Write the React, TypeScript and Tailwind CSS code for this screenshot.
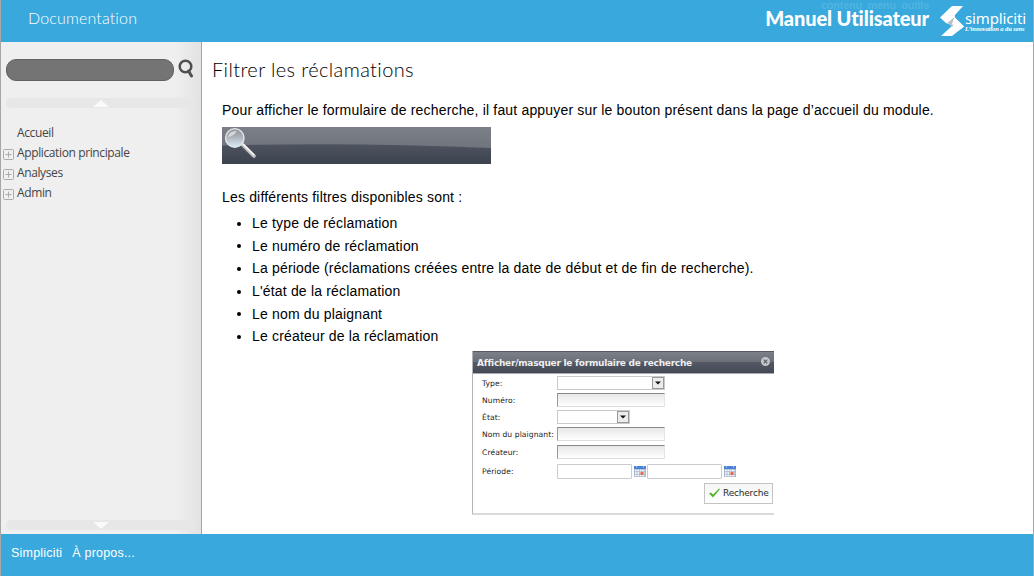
import type { ReactNode } from "react";

function SimplicitiLogo() {
  return (
    <svg className="h-[30px] w-6 shrink-0" viewBox="0 0 24 30" aria-hidden="true">
      <path d="M12 0H23L15 9L14 20L6 17L0 11.500z" fill="#fff" />
      <path d="M14 11L24 20.500L12 30H1L12 20L8 17z" fill="#fff" />
      <path d="M14.500 11L7.500 16.800L12 20.500L17 17.500z" fill="#b9bfc8" />
      <path d="M14.500 11L24 20.500L18 25L12 18z" fill="#fff" />
    </svg>
  );
}

function Header() {
  return (
    <header className="relative flex h-[42px] shrink-0 items-start bg-[#39a8dc] text-white">
      <div className="ml-[27px] mt-[6px] font-['Lato'] text-[16px] leading-6 tracking-[0.15px] font-light whitespace-nowrap">Documentation</div>
      <div className="absolute right-[104px] top-0 whitespace-nowrap font-['Liberation_Sans'] text-[11px] leading-[10px] font-bold tracking-[-0.27px] text-[#50b4e2]">contenu&nbsp; menu&nbsp; outils</div>
      <div className="relative ml-auto mt-[4px] whitespace-nowrap font-['Lato'] text-[20px] leading-7 font-black tracking-[-0.12px]">Manuel Utilisateur</div>
      <div className="ml-[11px] mt-[6px] flex w-[93px] items-start">
        <SimplicitiLogo />
        <div className="ml-px mt-[4px] whitespace-nowrap">
          <div className="font-['Noto_Sans'] text-[15px] leading-[16px] tracking-[-0.15px]">simpliciti</div>
          <div className="font-['Liberation_Serif'] text-[6.500px] leading-[6px] font-bold italic tracking-[-0.08px]">L’innovation a du sens</div>
        </div>
      </div>
    </header>
  );
}

function ScrollBar({ down = false }: { down?: boolean }) {
  return (
    <div className="flex h-[10px] w-[190px] items-center justify-center rounded-full bg-[#e7e7e7]">
      <svg className="h-[7px] w-4" viewBox="0 0 16 7">
        <path d={down ? "M0 0h16L8 7z" : "M0 7h16L8 0z"} fill="#fafafa" />
      </svg>
    </div>
  );
}

function NavItem({ label, expandable = true }: { label: string; expandable?: boolean }) {
  return (
    <li className="flex h-5 items-center">
      <span className="mt-[5px] flex w-[14px]">
        {expandable && (
          <svg className="h-[11px] w-[11px]" viewBox="0 0 11 11" fill="none" stroke="#ababab">
            <rect x=".5" y=".5" width="10" height="10" rx="1" />
            <path d="M2.500 5.500h6M5.500 2.500v6" />
          </svg>
        )}
      </span>
      <span className="mt-[2px] whitespace-nowrap font-['Open_Sans'] text-[12px] leading-5 tracking-[-0.38px] text-[#454545]">{label}</span>
    </li>
  );
}

function Sidebar() {
  return (
    <aside className="flex w-[201px] shrink-0 flex-col border-r border-[#a6a6a6] bg-[linear-gradient(to_right,#efefef_87%,#e2e2e2)] pl-[5px]">
      <div className="mt-[17px] flex">
        <div className="h-[22px] w-[168px] rounded-[10px] border border-[#626262] bg-[#747474]" />
        <svg className="ml-1 h-[21px] w-[17px]" viewBox="0 0 17 21" fill="none" stroke="#4f4f4f">
          <circle cx="7.500" cy="7.500" r="5.800" strokeWidth="2.500" />
          <path d="M10.500 12l3 5" strokeWidth="3" strokeLinecap="round" />
        </svg>
      </div>
      <div className="mt-[17px]"><ScrollBar /></div>
      <ul className="-ml-[3px] mt-[14px]">
        <NavItem label="Accueil" expandable={false} />
        <NavItem label="Application principale" />
        <NavItem label="Analyses" />
        <NavItem label="Admin" />
      </ul>
      <div className="mt-auto mb-1"><ScrollBar down /></div>
    </aside>
  );
}

function SearchBanner() {
  return (
    <svg className="block h-[37px] w-[269px]" viewBox="0 0 269 37">
      <defs>
        <linearGradient id="top" x2="0" y2="1"><stop stopColor="#7b7f88" /><stop offset="1" stopColor="#676c76" /></linearGradient>
        <linearGradient id="bottom" x2="0" y2="1"><stop stopColor="#4d535f" /><stop offset="1" stopColor="#3d434e" /></linearGradient>
        <linearGradient id="lens" x2="0" y2="1"><stop stopColor="#8b9096" /><stop offset=".5" stopColor="#b2b8bf" /><stop offset="1" stopColor="#d8ebff" /></linearGradient>
      </defs>
      <rect width="269" height="37" fill="url(#top)" />
      <path d="M0 18.500Q135 15 269 21v16H0z" fill="url(#bottom)" />
      <path d="M20 18l12 11" stroke="#51565f" strokeWidth="5" strokeLinecap="round" />
      <path d="M20 17l12 12" stroke="#c4c4c4" strokeWidth="3.500" strokeLinecap="round" />
      <path d="M21 17l11 11" stroke="#fff" strokeWidth="1.200" />
      <circle cx="12.800" cy="11" r="9.200" fill="url(#lens)" stroke="#dfe2e6" strokeWidth="1.500" />
      <path d="M6 10Q8 3 15 4Q12 9 6 10" fill="#eef2f5" opacity=".65" />
    </svg>
  );
}

function FieldRow({ label, height, children }: { label: string; height: string; children: ReactNode }) {
  return (
    <div className={`flex items-start ${height}`}>
      <span className="w-[75px] shrink-0 whitespace-nowrap pt-px font-['DejaVu_Sans'] text-[7.600px] leading-[14px] tracking-[0.08px] text-[#222]">{label}</span>
      {children}
    </div>
  );
}

function Select({ width }: { width: string }) {
  return (
    <div className={`flex h-[14px] justify-end border border-[#c8c9cc] bg-white ${width}`}>
      <div className="flex w-3 items-center justify-center border border-[#999] bg-[#ececec]">
        <svg className="h-1 w-[6px]" viewBox="0 0 6 4"><path d="M0 .5h6L3 3.500z" fill="#111" /></svg>
      </div>
    </div>
  );
}

function TextInput() {
  return <div className="h-[14px] w-[108px] border border-t-[#888] border-r-[#e5e5e5] border-b-[#ddd] border-l-[#999] bg-[linear-gradient(#e7e7e7,#fff)]" />;
}

function CalendarIcon() {
  return (
    <svg className="mt-[2px] h-[11px] w-[12px]" viewBox="0 0 12 11">
      <path d="M0 0h12v11H0z" fill="#a9b8d2" />
      <path d="M0 0h12v3H0z" fill="#4a82d8" />
      <path d="M1 4.500h10M1 7h10M1 9.500h10" stroke="#fff" strokeWidth="1.600" strokeDasharray="1.600 .8" />
      <path d="M6.500 6h3v3h-3z" fill="#e6694b" />
      <path d="M2.500 0v1.500M9.500 0v1.500" stroke="#adc7ee" />
    </svg>
  );
}

function SearchForm() {
  return (
    <section className="ml-[270px] mt-[3px] flex h-[164px] w-[302px] flex-col border-b-2 border-l border-[#d9d9d9] border-l-[#b1b4b8] bg-white">
      <div className="flex h-[23px] items-center justify-between border-t border-b border-t-[#555a63] border-b-[#a8aab0] bg-[linear-gradient(#7b7f88,#6b7079_45%,#525964_50%,#434a55)] pl-[4px] pr-[4px] text-[#f0f0f0]">
        <span className="whitespace-nowrap pt-[2px] font-['DejaVu_Sans'] text-[9px] leading-5 font-bold tracking-[-0.25px]">Afficher/masquer le formulaire de recherche</span>
        <svg className="-mt-[2px] h-[9px] w-[9px]" viewBox="0 0 9 9"><circle cx="4.500" cy="4.500" r="4.500" fill="#c5c6c8" /><path d="M2.700 2.700l3.600 3.600m0-3.600L2.700 6.300" stroke="#555b65" strokeWidth="1.200" /></svg>
      </div>
      <div className="pl-[9px] pt-[2px]">
        <FieldRow label="Type:" height="h-[17px]"><Select width="w-[108px]" /></FieldRow>
        <FieldRow label="Numéro:" height="h-[17px]"><TextInput /></FieldRow>
        <FieldRow label="État:" height="h-[17px]"><Select width="w-[73px]" /></FieldRow>
        <FieldRow label="Nom du plaignant:" height="h-[18px]"><TextInput /></FieldRow>
        <FieldRow label="Créateur:" height="h-[19px]"><TextInput /></FieldRow>
        <FieldRow label="Période:" height="h-[19px]">
          <div className="mr-[2px] h-[15px] w-[75px] rounded-[1px] border border-[#c9cbd0]" />
          <CalendarIcon />
          <div className="mr-[2px] ml-px h-[15px] w-[75px] rounded-[1px] border border-[#c9cbd0]" />
          <CalendarIcon />
        </FieldRow>
      </div>
      <button className="mr-px flex h-[21px] w-[69px] items-center self-end border border-[#c4c4c4] bg-[linear-gradient(#f5f5f5,#fff)] pl-[4px] text-[#292929]">
        <svg className="mr-[3px] h-[10px] w-[11px] shrink-0" viewBox="0 0 11 10"><path d="M0 5.500l2-1 2 2L10 .5 11 1 4 9.500z" fill="#55b32c" /></svg>
        <span className="whitespace-nowrap font-['DejaVu_Sans'] text-[9px] leading-5 tracking-[-0.2px]">Recherche</span>
      </button>
    </section>
  );
}

const filters = [
  "Le type de réclamation",
  "Le numéro de réclamation",
  "La période (réclamations créées entre la date de début et de fin de recherche).",
  "L'état de la réclamation",
  "Le nom du plaignant",
  "Le créateur de la réclamation",
];

function Article() {
  return (
    <article className="min-w-0 flex-1 bg-white font-['Liberation_Sans'] text-[14px] text-black">
      <h1 className="ml-[10px] mt-[12px] h-[33px] whitespace-nowrap font-['Lato'] text-[20px] leading-[30px] font-light tracking-[0.38px]">Filtrer les réclamations</h1>
      <div className="ml-5 mt-[12px]">
        <p className="h-7 whitespace-nowrap leading-[22px] tracking-[0.173px]">Pour afficher le formulaire de recherche, il faut appuyer sur le bouton présent dans la page d’accueil du module.</p>
        <SearchBanner />
        <p className="mt-[22px] h-[26px] whitespace-nowrap leading-[22px] tracking-[0.173px]">Les différents filtres disponibles sont :</p>
        <ul className="pl-[30px]">
          {filters.map((filter) => (
            <li key={filter} className="flex h-[22.600px] items-center whitespace-nowrap leading-[22px] tracking-[0.173px]">
              <span className="-ml-[15px] mr-[11px] mt-px h-1 w-1 rounded-full bg-black" />
              {filter}
            </li>
          ))}
        </ul>
      </div>
      <SearchForm />
    </article>
  );
}

export default function App() {
  return (
    <div className="flex h-[576px] w-[1034px] flex-col overflow-hidden border-r border-l border-[#a6a6a6] font-['Liberation_Sans',sans-serif]">
      <Header />
      <main className="flex h-[492px] shrink-0">
        <Sidebar />
        <Article />
      </main>
      <footer className="flex h-[42px] shrink-0 items-start gap-[10px] bg-[#39a8dc] pt-[9px] pl-[10px] text-[12.500px] leading-5 tracking-[0.2px] text-white">
        <span>Simpliciti</span>
        <span>À propos...</span>
      </footer>
    </div>
  );
}
